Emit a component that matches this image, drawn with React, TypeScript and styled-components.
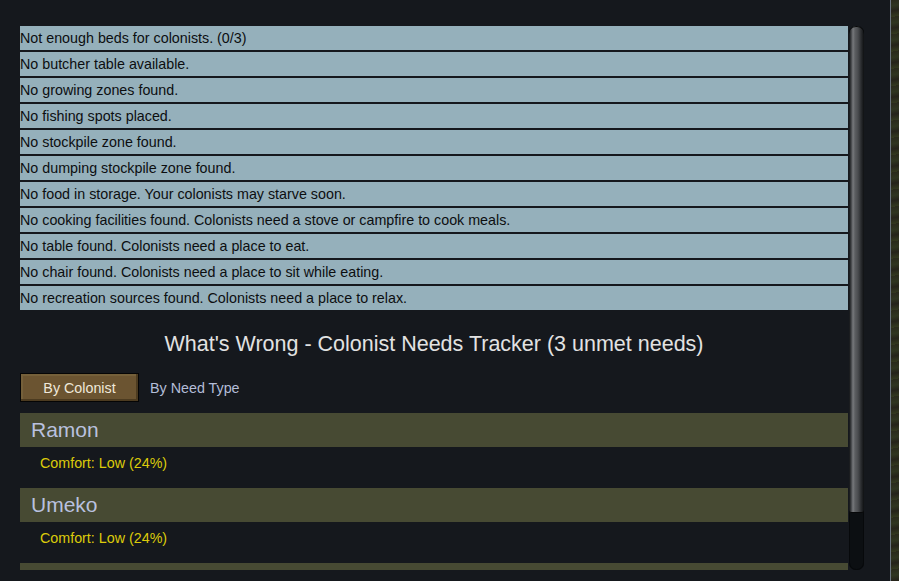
import React from 'react';
import styled, { createGlobalStyle } from 'styled-components';

// ----------------------------------------------------
// Global
// ----------------------------------------------------

const GlobalStyle = createGlobalStyle`
  html, body {
    margin: 0;
    padding: 0;
    background: #15181d;
    font-family: "Liberation Sans", Arial, sans-serif;
  }
  #root {
    height: 100vh;
  }
`;

// ----------------------------------------------------
// Styled Components
// ----------------------------------------------------

const Screen = styled.div`
  display: flex;
  width: 899px;
  height: 581px;
  overflow: hidden;
`;

const Window = styled.div`
  width: 891px;
  height: 581px;
  background: #15181d;
  border-right: 1px solid #6d7682;
  padding: 26px 0 0 20px;
  box-sizing: border-box;
  display: flex;
  align-items: flex-start;
`;

const GameWorld = styled.div`
  flex: 1;
  background: repeating-linear-gradient(
    170deg,
    #2a2a1c 0px,
    #2f3520 6px,
    #25231a 11px,
    #33391f 17px
  );
`;

const ScrollView = styled.div`
  width: 828px;
  height: 544px;
  overflow: hidden;
`;

const AlertList = styled.div`
  display: flex;
  flex-direction: column;
  gap: 2px;
`;

const AlertRow = styled.div`
  height: 24px;
  line-height: 24px;
  background: #95b0bb;
  color: #0c0e10;
  font-size: 14.3px;
  white-space: nowrap;
`;

const Title = styled.h1`
  margin: 0;
  padding: 22px 0 0;
  height: 36px;
  font-weight: normal;
  font-size: 21.5px;
  line-height: 24px;
  color: #e2e2e2;
  text-align: center;
  white-space: nowrap;
`;

const Tabs = styled.div`
  display: flex;
  align-items: center;
  gap: 11px;
  margin-top: 5px;
  height: 29px;
`;

const TabButton = styled.button<{ $active?: boolean }>`
  font-family: inherit;
  font-size: 14.3px;
  padding: 0;
  cursor: pointer;
  height: 29px;
  ${({ $active }) =>
    $active
      ? `
    width: 119px;
    color: #efe8da;
    background: #6b5431;
    border: 1px solid #050505;
    box-shadow: inset -2px -2px 0 #4c3b20, inset 2px 2px 0 #75603a;
  `
      : `
    color: #b3bdd8;
    background: none;
    border: none;
  `}
`;

const ColonistBlock = styled.section<{ $first?: boolean }>`
  margin-top: ${({ $first }) => ($first ? '11px' : '0')};
  display: flex;
  flex-direction: column;
`;

const ColonistHeader = styled.div`
  height: 34px;
  background: #474a33;
  color: #b9c1df;
  font-size: 21px;
  line-height: 34px;
  padding-left: 11px;
`;

const NeedLine = styled.div`
  height: 41px;
  padding: 8px 0 0 20px;
  box-sizing: border-box;
  font-size: 14.3px;
  line-height: 16px;
  color: #dccb0a;
`;

const ScrollBar = styled.div`
  position: relative;
  width: 15px;
  height: 544px;
  margin-left: 1px;
  border-radius: 7px;
  background: #0c0f12;
  box-shadow: inset 0 0 0 1px #07090b;
  overflow: hidden;
`;

const Thumb = styled.div`
  position: absolute;
  left: 0;
  top: 0;
  width: 15px;
  height: 487px;
  border-radius: 7px 7px 2px 2px;
  background: linear-gradient(
    90deg,
    #101214 0px,
    #3c3e41 2px,
    #77797c 4px,
    #5c5e61 6px,
    #4a4c4f 9px,
    #2b2d30 12px,
    #0e1012 15px
  );
  box-shadow: inset 0 1px 0 #070809, inset 0 -1px 0 #070809;
`;

// ----------------------------------------------------
// Data
// ----------------------------------------------------

const alerts = [
  'Not enough beds for colonists. (0/3)',
  'No butcher table available.',
  'No growing zones found.',
  'No fishing spots placed.',
  'No stockpile zone found.',
  'No dumping stockpile zone found.',
  'No food in storage. Your colonists may starve soon.',
  'No cooking facilities found. Colonists need a stove or campfire to cook meals.',
  'No table found. Colonists need a place to eat.',
  'No chair found. Colonists need a place to sit while eating.',
  'No recreation sources found. Colonists need a place to relax.',
];

// the third entry only peeks in at the bottom of the scroll view
const colonists = [
  { name: 'Ramon', needs: ['Comfort: Low (24%)'] },
  { name: 'Umeko', needs: ['Comfort: Low (24%)'] },
  { name: '', needs: [] as string[] },
];

// ----------------------------------------------------
// App
// ----------------------------------------------------

const App: React.FC = () => {
  return (
    <>
      <GlobalStyle />
      <Screen>
        <Window>
          <ScrollView>
            <AlertList>
              {alerts.map((a) => (
                <AlertRow key={a}>{a}</AlertRow>
              ))}
            </AlertList>

            <Title>What's Wrong - Colonist Needs Tracker (3 unmet needs)</Title>

            <Tabs>
              <TabButton $active>By Colonist</TabButton>
              <TabButton>By Need Type</TabButton>
            </Tabs>

            {colonists.map((c, i) => (
              <ColonistBlock key={i} $first={i === 0}>
                <ColonistHeader>{c.name}</ColonistHeader>
                {c.needs.map((n) => (
                  <NeedLine key={n}>{n}</NeedLine>
                ))}
              </ColonistBlock>
            ))}
          </ScrollView>
          <ScrollBar>
            <Thumb />
          </ScrollBar>
        </Window>
        <GameWorld />
      </Screen>
    </>
  );
};

export default App;
